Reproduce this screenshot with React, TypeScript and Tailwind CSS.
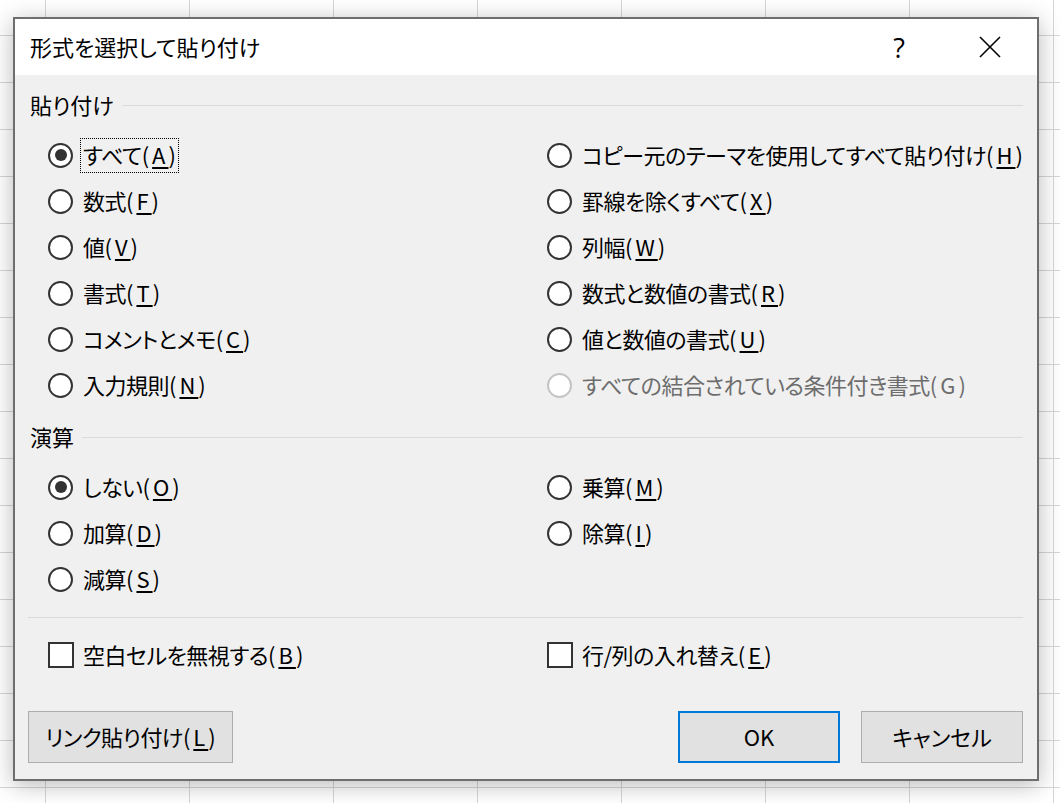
import React from "react";

type Opt = { label: string; key?: string; checked?: boolean; disabled?: boolean; focus?: boolean };

const pasteLeft: Opt[] = [
  { label: "すべて", key: "A", checked: true, focus: true },
  { label: "数式", key: "F" },
  { label: "値", key: "V" },
  { label: "書式", key: "T" },
  { label: "コメントとメモ", key: "C" },
  { label: "入力規則", key: "N" },
];

const pasteRight: Opt[] = [
  { label: "コピー元のテーマを使用してすべて貼り付け", key: "H" },
  { label: "罫線を除くすべて", key: "X" },
  { label: "列幅", key: "W" },
  { label: "数式と数値の書式", key: "R" },
  { label: "値と数値の書式", key: "U" },
  { label: "すべての結合されている条件付き書式", key: "G", disabled: true },
];

const opLeft: Opt[] = [
  { label: "しない", key: "O", checked: true },
  { label: "加算", key: "D" },
  { label: "減算", key: "S" },
];

const opRight: Opt[] = [
  { label: "乗算", key: "M" },
  { label: "除算", key: "I" },
];

// label text + "(K)" mnemonic; disabled items show the letter without underline
function Label({ text, k, plain }: { text: string; k?: string; plain?: boolean }) {
  return (
    <>
      <span className="tracking-[-0.5px]">{text}</span>
      {k && (
        <span className="tracking-[3px]">
          (
          {plain ? (
            k
          ) : (
            <u className="underline underline-offset-[3px] decoration-[1.5px]">{k}</u>
          )}
          <span className="tracking-normal">)</span>
        </span>
      )}
    </>
  );
}

function Radio({ opt }: { opt: Opt }) {
  return (
    <div className="h-[46px] flex items-center">
      <span
        className={`w-[25px] h-[25px] rounded-full border-2 bg-white flex items-center justify-center shrink-0 ${
          opt.disabled ? "border-[#c4c4c4]" : "border-[#333333]"
        }`}
      >
        {opt.checked && <span className="w-[12px] h-[12px] rounded-full bg-[#333333]" />}
      </span>
      <span
        className={`ml-[8px] px-[2px] leading-[31px] pb-[2px] whitespace-nowrap ${opt.disabled ? "text-[#6d6d6d]" : "text-black"} ${
          opt.focus ? "outline outline-1 outline-dotted outline-black" : ""
        }`}
      >
        <Label text={opt.label} k={opt.key} plain={opt.disabled} />
      </span>
    </div>
  );
}

function Section({ title }: { title: string }) {
  return (
    <div className="h-[28px] flex items-center">
      <span className="whitespace-nowrap pb-[2px]">{title}</span>
      <span className="flex-1 h-px bg-[#dadada] ml-[8px]" />
    </div>
  );
}

function Check({ text, k }: { text: string; k: string }) {
  return (
    <div className="h-[46px] flex items-center">
      <span className="w-[26px] h-[26px] border-2 border-[#333333] bg-white shrink-0" />
      <span className="ml-[9px] whitespace-nowrap pb-[2px]">
        <Label text={text} k={k} />
      </span>
    </div>
  );
}

export default function App() {
  return (
    <div
      className="w-[1060px] h-[803px] overflow-hidden bg-white bg-[linear-gradient(to_right,#d6d6d6_1px,transparent_1px),linear-gradient(to_bottom,#d6d6d6_1px,transparent_1px)] bg-[size:144px_47px] bg-[position:45px_35px] pt-[17px] pl-[13px] text-[22px] text-black [font-family:'Noto_Sans_CJK_JP',sans-serif] [font-feature-settings:'palt']"
    >
      <div className="w-[1026px] h-[764px] border-2 border-[#6e6e6e] bg-[#f0f0f0] shadow-[0_4px_22px_rgba(0,0,0,0.28)] flex flex-col">
        {/* title bar */}
        <div className="h-[56px] bg-white flex items-center pl-[15px] shrink-0">
          <span className="flex-1 pb-[2px]">形式を選択して貼り付け</span>
          <span className="w-[20px] text-center mr-[70px] text-[27px] leading-none [font-family:'Open_Sans',sans-serif]">?</span>
          <svg width="22" height="22" viewBox="0 0 22 22" className="mr-[36px]">
            <path d="M1 1 L21 21 M21 1 L1 21" stroke="#000" strokeWidth="1.6" />
          </svg>
        </div>

        <div className="pl-[15px] pr-[14px] pt-[16px] flex flex-col">
          <Section title="貼り付け" />
          <div className="mt-[13px] grid grid-cols-[499px_1fr] pl-[18px]">
            <div>
              {pasteLeft.map((o) => (
                <Radio key={o.label} opt={o} />
              ))}
            </div>
            <div>
              {pasteRight.map((o) => (
                <Radio key={o.label} opt={o} />
              ))}
            </div>
          </div>

          <div className="mt-[15px]">
            <Section title="演算" />
          </div>
          <div className="mt-[13px] grid grid-cols-[499px_1fr] pl-[18px]">
            <div>
              {opLeft.map((o) => (
                <Radio key={o.label} opt={o} />
              ))}
            </div>
            <div>
              {opRight.map((o) => (
                <Radio key={o.label} opt={o} />
              ))}
            </div>
          </div>

          <div className="mt-[15px] h-px bg-[#dadada] -ml-[2px]" />

          <div className="mt-[14px] grid grid-cols-[499px_1fr] pl-[18px]">
            <Check text="空白セルを無視する" k="B" />
            <Check text="行/列の入れ替え" k="E" />
          </div>

          <div className="mt-[33px] flex items-center -ml-[2px]">
            <button className="w-[205px] h-[52px] bg-[#e1e1e1] border border-[#adadad] flex items-center justify-center pb-[2px]">
              <Label text="リンク貼り付け" k="L" />
            </button>
            <button className="ml-auto w-[162px] h-[52px] bg-[#e1e1e1] border-2 border-[#0078d7] flex items-center justify-center pb-[2px]">
              OK
            </button>
            <button className="ml-[21px] w-[162px] h-[52px] bg-[#e1e1e1] border border-[#adadad] flex items-center justify-center pb-[2px]">
              キャンセル
            </button>
          </div>
        </div>
      </div>
    </div>
  );
}
